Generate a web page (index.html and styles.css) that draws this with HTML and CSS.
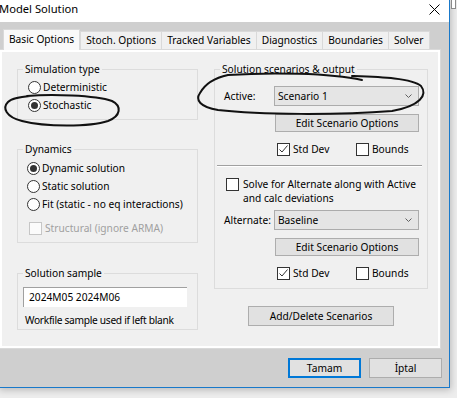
FILE: index.html
```html
<!DOCTYPE html>
<html lang="en">
<head>
    <meta charset="UTF-8">
    <meta name="viewport" content="width=device-width, initial-scale=1.0">
    <title>Model Solution</title>
    <link rel="stylesheet" href="styles.css">
</head>
<body>
    <div class="peek"></div>
    <div class="window">
        <div class="titlebar">
            <span class="title">Model Solution</span>
            <svg class="close" width="11" height="11" viewBox="0 0 11 11">
                <path d="M0.5 0.5 L10.5 10.5 M10.5 0.5 L0.5 10.5" stroke="#000" stroke-width="1" fill="none"/>
            </svg>
        </div>
        <div class="client">
            <div class="tabs">
                <div class="tab active">Basic Options</div>
                <div class="tab">Stoch. Options</div>
                <div class="tab">Tracked Variables</div>
                <div class="tab">Diagnostics</div>
                <div class="tab">Boundaries</div>
                <div class="tab">Solver</div>
            </div>

            <div class="page">
                <div class="col-left">
                    <fieldset class="group sim">
                        <legend>Simulation type</legend>
                        <div class="group-body">
                            <div class="opt"><span class="radio"></span>Deterministic</div>
                            <div class="opt"><span class="radio on"></span>Stochastic</div>
                        </div>
                    </fieldset>

                    <fieldset class="group dyn">
                        <legend>Dynamics</legend>
                        <div class="group-body">
                            <div class="opt"><span class="radio on"></span>Dynamic solution</div>
                            <div class="opt"><span class="radio"></span>Static solution</div>
                            <div class="opt"><span class="radio"></span>Fit (static - no eq interactions)</div>
                            <div class="opt disabled"><span class="check"></span>Structural (ignore ARMA)</div>
                        </div>
                    </fieldset>

                    <fieldset class="group sample">
                        <legend>Solution sample</legend>
                        <div class="group-body">
                            <div class="textbox">2024M05 2024M06</div>
                            <div class="hint">Workfile sample used if left blank</div>
                        </div>
                    </fieldset>
                </div>

                <div class="col-right">
                    <fieldset class="group scen">
                        <legend>Solution scenarios &amp; output</legend>
                        <div class="group-body">
                            <div class="field-row">
                                <span class="field-label">Active:</span>
                                <div class="select">
                                    <span>Scenario 1</span>
                                    <svg width="7" height="4" viewBox="0 0 7 4"><path d="M0.5 0.5 L3.5 3.5 L6.5 0.5" stroke="#606060" fill="none"/></svg>
                                </div>
                            </div>
                            <div class="btn edit">Edit Scenario Options</div>
                            <div class="check-row">
                                <div class="opt std"><span class="check on"><svg width="11" height="11" viewBox="0 0 11 11"><path d="M1.5 5.5 L4 8 L9.5 1.5" stroke="#333" fill="none"/></svg></span>Std Dev</div>
                                <div class="opt"><span class="check"></span>Bounds</div>
                            </div>

                            <div class="separator"></div>

                            <div class="solve">
                                <span class="check"></span>
                                <span class="solve-text">Solve for Alternate along with Active<br>and calc deviations</span>
                            </div>
                            <div class="field-row alt">
                                <span class="field-label">Alternate:</span>
                                <div class="select">
                                    <span>Baseline</span>
                                    <svg width="7" height="4" viewBox="0 0 7 4"><path d="M0.5 0.5 L3.5 3.5 L6.5 0.5" stroke="#606060" fill="none"/></svg>
                                </div>
                            </div>
                            <div class="btn edit">Edit Scenario Options</div>
                            <div class="check-row">
                                <div class="opt std"><span class="check on"><svg width="11" height="11" viewBox="0 0 11 11"><path d="M1.5 5.5 L4 8 L9.5 1.5" stroke="#333" fill="none"/></svg></span>Std Dev</div>
                                <div class="opt"><span class="check"></span>Bounds</div>
                            </div>
                        </div>
                    </fieldset>
                    <div class="btn add">Add/Delete Scenarios</div>
                </div>
            </div>

            <div class="footer">
                <div class="btn default">Tamam</div>
                <div class="btn">İptal</div>
            </div>
        </div>
    </div>

    <!-- pen marks drawn over the screenshot -->
    <svg class="scribble" width="457" height="398" viewBox="0 0 457 398">
        <path d="M27 96 C50 94, 95 95, 112 101 C122 106, 121 116, 108 121 C90 127, 45 127, 22 121 C6 117, 2 108, 8 102 C12 98, 20 97, 30 96"/>
        <path d="M200 93 C205 84, 214 78, 228 75 C270 72, 330 73, 362 80 M352 76 C380 77, 412 78, 421 86 C428 95, 420 106, 392 111 C340 115, 260 115, 218 110 C200 107, 195 100, 200 93"/>
    </svg>
</body>
</html>
```

FILE: styles.css
```css
* {
    box-sizing: border-box;
}
body {
    margin: 0;
    width: 457px;
    height: 398px;
    overflow: hidden;
    position: relative;
    background: #ededed;
    font-family: "Noto Sans", sans-serif;
    font-size: 10.2px;
    color: #000;
}
.window {
    width: 450px;
    height: 388px;
    display: flex;
    flex-direction: column;
    border-right: 1px solid #1979ca;
    border-bottom: 1px solid #1979ca;
    box-shadow: 0 1px 7px 1px rgba(0, 0, 0, 0.22);
    background: #fff;
}
.peek {
    position: absolute;
    left: 451px;
    top: 0;
    width: 5px;
    height: 9px;
    border: 1px solid #8a8a8a;
    border-top: none;
    background: #fff;
}
.titlebar {
    height: 22px;
    flex: none;
    display: flex;
    justify-content: space-between;
    align-items: flex-start;
    padding: 2px 9px 0 0;
    background: #fff;
}
.title {
    font-size: 11.2px;
    line-height: 14px;
    margin-left: -1px;
}
.close {
    margin-top: 2px;
}
.client {
    flex: 1;
    background: #cfcfcf;
    padding-top: 7px;
}
.tabs {
    display: flex;
    align-items: flex-end;
    height: 20px;
    padding-left: 3px;
}
.tab {
    height: 18px;
    line-height: 17px;
    padding: 0 5px;
    margin-right: -1px;
    border: 1px solid #d9d9d9;
    border-bottom: none;
    background: #f0f0f0;
    white-space: nowrap;
}
.tab.active {
    position: relative;
    z-index: 1;
    height: 21px;
    line-height: 19px;
    margin: 0 0 -1px 0;
    padding: 0 5px;
    background: #f9f9f9;
}
.page {
    width: 442px;
    height: 300px;
    margin-left: -1px;
    display: flex;
    gap: 16px;
    padding: 12px 0 0 17px;
    border: 1px solid #d9d9d9;
    background: #f0f0f0;
    box-shadow: inset 0 0 0 2px #fff;
}
.col-left {
    width: 181px;
    display: flex;
    flex-direction: column;
}
.col-right {
    width: 214px;
    display: flex;
    flex-direction: column;
}
.group {
    margin: 0;
    padding: 0;
    min-width: 0;
    border: 1px solid #dcdcdc;
}
.group legend {
    padding: 0 2px;
    margin-left: 5px;
    line-height: 14px;
}
.sim .group-body {
    padding: 2px 0 5px 10px;
}
.dyn {
    margin-top: 22px;
}
.dyn .group-body {
    padding: 3px 0 5px 9px;
}
.sample {
    margin-top: 23px;
}
.sample .group-body {
    padding: 7px 0 1px 5px;
}
.opt {
    display: flex;
    align-items: center;
    gap: 2px;
    height: 18px;
    white-space: nowrap;
}
.opt.disabled {
    margin-top: 6px;
    color: #a0a0a0;
    padding-left: 2px;
    gap: 3px;
}
.radio, .check {
    flex: none;
    width: 13px;
    height: 13px;
    border: 1px solid #333;
    background: #fff;
    display: flex;
    align-items: center;
    justify-content: center;
}
.radio {
    border-radius: 50%;
}
.radio.on::after {
    content: "";
    width: 7px;
    height: 7px;
    border-radius: 50%;
    background: #333;
}
.disabled .check {
    border-color: #c6c6c6;
    background: #fbfbfb;
}
.textbox {
    width: 164px;
    height: 20px;
    line-height: 18px;
    padding-left: 5px;
    background: #fff;
    border-top: 1px solid #a0a0a0;
    border-left: 1px solid #a0a0a0;
}
.hint {
    margin: 5px 0 0 2px;
    line-height: 16px;
    letter-spacing: -0.3px;
    white-space: nowrap;
}
.scen .group-body {
    padding: 0 0 7px 9px;
}
.field-row {
    display: flex;
    align-items: center;
    margin-top: 10px;
    height: 20px;
}
.field-row.alt {
    margin-top: 5px;
}
.field-label {
    width: 50px;
}
.select {
    width: 145px;
    height: 20px;
    display: flex;
    align-items: center;
    justify-content: space-between;
    padding: 0 6px 0 3px;
    border: 1px solid #acacac;
    background: #e5e5e5;
}
.btn {
    height: 20px;
    display: flex;
    align-items: center;
    justify-content: center;
    border: 1px solid #adadad;
    background: #e1e1e1;
    white-space: nowrap;
}
.btn.edit {
    width: 144px;
    height: 18px;
    margin: 8px 0 0 51px;
}
.check-row {
    display: flex;
    margin-top: 9px;
    padding-left: 53px;
    height: 16px;
}
.check-row .opt {
    height: 16px;
    gap: 3px;
}
.opt.std {
    width: 79px;
}
.separator {
    margin: 8px 5px 0 -7px;
    border-top: 1px solid #a0a0a0;
    border-bottom: 1px solid #fff;
}
.solve {
    display: flex;
    align-items: flex-start;
    gap: 4px;
    margin-top: 10px;
    padding-left: 2px;
}
.solve .check {
    margin-top: 1px;
}
.solve-text {
    line-height: 14px;
}
.btn.add {
    width: 146px;
    margin-top: 17px;
    align-self: center;
}
.footer {
    display: flex;
    justify-content: flex-end;
    gap: 8px;
    margin-top: 9px;
    padding-right: 7px;
}
.footer .btn {
    width: 73px;
}
.btn.default {
    border: 2px solid #0078d7;
}
.scribble {
    position: absolute;
    left: 0;
    top: 0;
    pointer-events: none;
}
.scribble path {
    fill: none;
    stroke: #111;
    stroke-width: 2;
    stroke-linecap: round;
    stroke-linejoin: round;
}
```
